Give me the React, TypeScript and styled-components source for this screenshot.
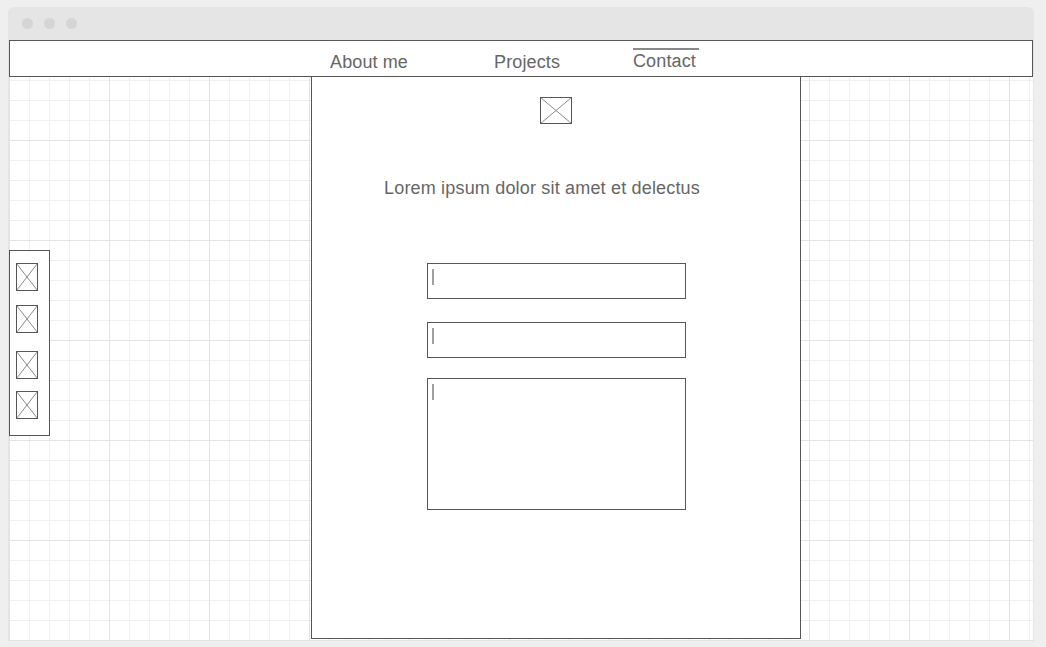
import React from "react";
import styled, { createGlobalStyle } from "styled-components";

const Global = createGlobalStyle`
  html, body { margin: 0; padding: 0; background: #efefef; }
  body {
    font-family: "Liberation Sans", Arial, sans-serif;
    padding: 7px 0 0 8px;
    width: 1046px; height: 647px; box-sizing: border-box; overflow: hidden;
  }
`;

const Window = styled.div`
  width: 1026px;
  background: #e5e5e5;
  border-radius: 6px 6px 0 0;
  padding: 0 1px 1px 1px;
  box-sizing: border-box;
`;

const TitleBar = styled.div`
  height: 33px;
  display: flex;
  align-items: center;
  gap: 11px;
  padding-left: 13px;
  box-sizing: border-box;
`;

const Dot = styled.span`
  width: 11px;
  height: 11px;
  border-radius: 50%;
  background: #d5d5d5;
`;

const Canvas = styled.div`
  width: 1024px;
  height: 600px;
  background-color: #ffffff;
  background-image:
    linear-gradient(to right, #e3e3e3 1px, transparent 1px),
    linear-gradient(to bottom, #e3e3e3 1px, transparent 1px),
    linear-gradient(to right, #efefef 1px, transparent 1px),
    linear-gradient(to bottom, #efefef 1px, transparent 1px);
  background-size: 100px 100px, 100px 100px, 20px 20px, 20px 20px;
  display: flex;
  flex-direction: column;
`;

const Nav = styled.nav`
  height: 37px;
  border: 1px solid #555;
  background: #fff;
  box-sizing: border-box;
  display: flex;
  align-items: flex-start;
  padding: 7px 0 0 320px;
`;

const NavLink = styled.a<{ $ml: number; $active?: boolean }>`
  margin-left: ${(p) => p.$ml}px;
  margin-top: ${(p) => (p.$active ? 0 : 4)}px;
  padding-top: ${(p) => (p.$active ? 1 : 0)}px;
  font-size: 18px;
  letter-spacing: 0.12px;
  line-height: 21px;
  color: #666;
  text-decoration: none;
  border-top: ${(p) => (p.$active ? "2px solid #888" : "none")};
  padding-right: ${(p) => (p.$active ? 3 : 0)}px;
`;

const Body = styled.div`
  display: flex;
  align-items: flex-start;
  flex: 1;
`;

const SideBar = styled.div`
  margin-top: 173px;
  width: 41px;
  height: 186px;
  box-sizing: border-box;
  border: 1px solid #555;
  background: #fff;
  display: flex;
  flex-direction: column;
  padding-left: 6px;
`;

const SideItem = styled.div<{ $mt: number }>`
  margin-top: ${(p) => p.$mt}px;
  display: flex;
`;

const Panel = styled.main`
  margin-left: 261px;
  width: 490px;
  height: 562px;
  box-sizing: border-box;
  border: 1px solid #555;
  border-top: none;
  background: #fff;
  display: flex;
  flex-direction: column;
`;

const Logo = styled.div`
  margin-top: 20px;
  display: flex;
  justify-content: center;
`;

const Lead = styled.p`
  margin: 54px 0 0 0;
  padding-left: 72px;
  font-size: 18px;
  letter-spacing: 0.18px;
  line-height: 21px;
  color: #666;
`;

const Form = styled.div`
  margin: 64px 0 0 115px;
  display: flex;
  flex-direction: column;
`;

const Field = styled.div<{ $h: number; $mt: number }>`
  width: 259px;
  height: ${(p) => p.$h}px;
  margin-top: ${(p) => p.$mt}px;
  box-sizing: border-box;
  border: 1px solid #555;
  background: #fff;
  padding: 5px 0 0 4px;
`;

const Caret = styled.span`
  display: block;
  width: 2px;
  height: 16px;
  background: #a0a0a0;
`;

const ImagePlaceholder = ({ w, h }: { w: number; h: number }) => (
  <svg width={w} height={h} viewBox={`0 0 ${w} ${h}`} style={{ display: "block" }}>
    <line x1="0.5" y1="0.5" x2={w - 0.5} y2={h - 0.5} stroke="#888" strokeWidth="1" />
    <line x1={w - 0.5} y1="0.5" x2="0.5" y2={h - 0.5} stroke="#888" strokeWidth="1" />
    <rect x="0.5" y="0.5" width={w - 1} height={h - 1} fill="none" stroke="#555" strokeWidth="1" />
  </svg>
);

export default function App() {
  return (
    <>
      <Global />
      <Window>
        <TitleBar>
          <Dot />
          <Dot />
          <Dot />
        </TitleBar>
        <Canvas>
          <Nav>
            <NavLink $ml={0}>About me</NavLink>
            <NavLink $ml={86}>Projects</NavLink>
            <NavLink $ml={73} $active>
              Contact
            </NavLink>
          </Nav>
          <Body>
            <SideBar>
              {[12, 14, 18, 12].map((mt, i) => (
                <SideItem key={i} $mt={mt}>
                  <ImagePlaceholder w={22} h={28} />
                </SideItem>
              ))}
            </SideBar>
            <Panel>
              <Logo>
                <ImagePlaceholder w={32} h={27} />
              </Logo>
              <Lead>Lorem ipsum dolor sit amet et delectus</Lead>
              <Form>
                <Field $h={36} $mt={0}>
                  <Caret />
                </Field>
                <Field $h={36} $mt={23}>
                  <Caret />
                </Field>
                <Field $h={132} $mt={20}>
                  <Caret />
                </Field>
              </Form>
            </Panel>
          </Body>
        </Canvas>
      </Window>
    </>
  );
}
